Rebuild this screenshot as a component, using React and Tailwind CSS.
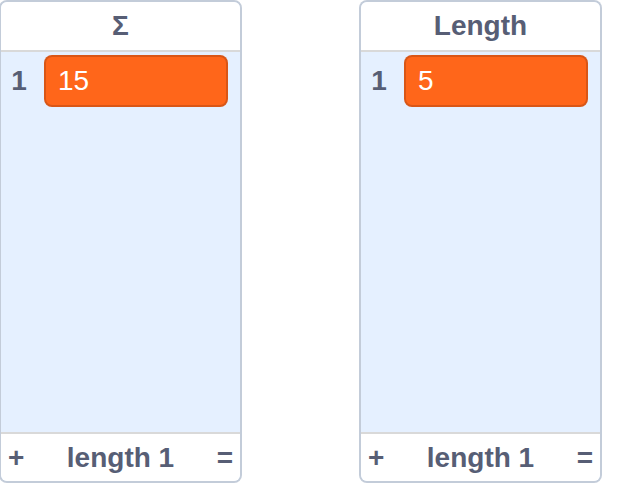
import React from 'react';

const lists = [
  { title: 'Σ', items: ['15'] },
  { title: 'Length', items: ['5'] },
];

function ListMonitor({ title, items }) {
  return (
    <div className="w-[243px] h-[483px] shrink-0 flex flex-col bg-[#e5f0ff] border-2 border-black/15 rounded-[8px] overflow-hidden text-[#575e75]">
      <div className="h-[50px] shrink-0 flex items-center justify-center bg-white border-b-2 border-black/15 font-bold text-[28px]">
        {title}
      </div>
      <div className="flex-1 pt-[2px]">
        {items.map((v, i) => (
          <div key={i} className="flex items-center h-[54px]">
            <div className="w-[36px] text-center font-bold text-[28px]">{i + 1}</div>
            <div className="flex-1 ml-[7px] mr-[12px] h-[52px] flex items-center pl-[12px] bg-[#ff661a] border-2 border-black/15 rounded-[8px] text-white text-[28px]">
              {v}
            </div>
          </div>
        ))}
      </div>
      <div className="h-[49px] shrink-0 flex items-center justify-between px-[7px] bg-white border-t-2 border-black/15 font-bold text-[28px]">
        <span>+</span>
        <span>length {items.length}</span>
        <span>=</span>
      </div>
    </div>
  );
}

export default function App() {
  return (
    <div className="w-[623px] h-[483px] bg-white flex gap-[117px] ml-[-1px]" style={{ fontFamily: '"Liberation Sans", Arial, sans-serif' }}>
      {lists.map((l, i) => (
        <ListMonitor key={i} title={l.title} items={l.items} />
      ))}
    </div>
  );
}
